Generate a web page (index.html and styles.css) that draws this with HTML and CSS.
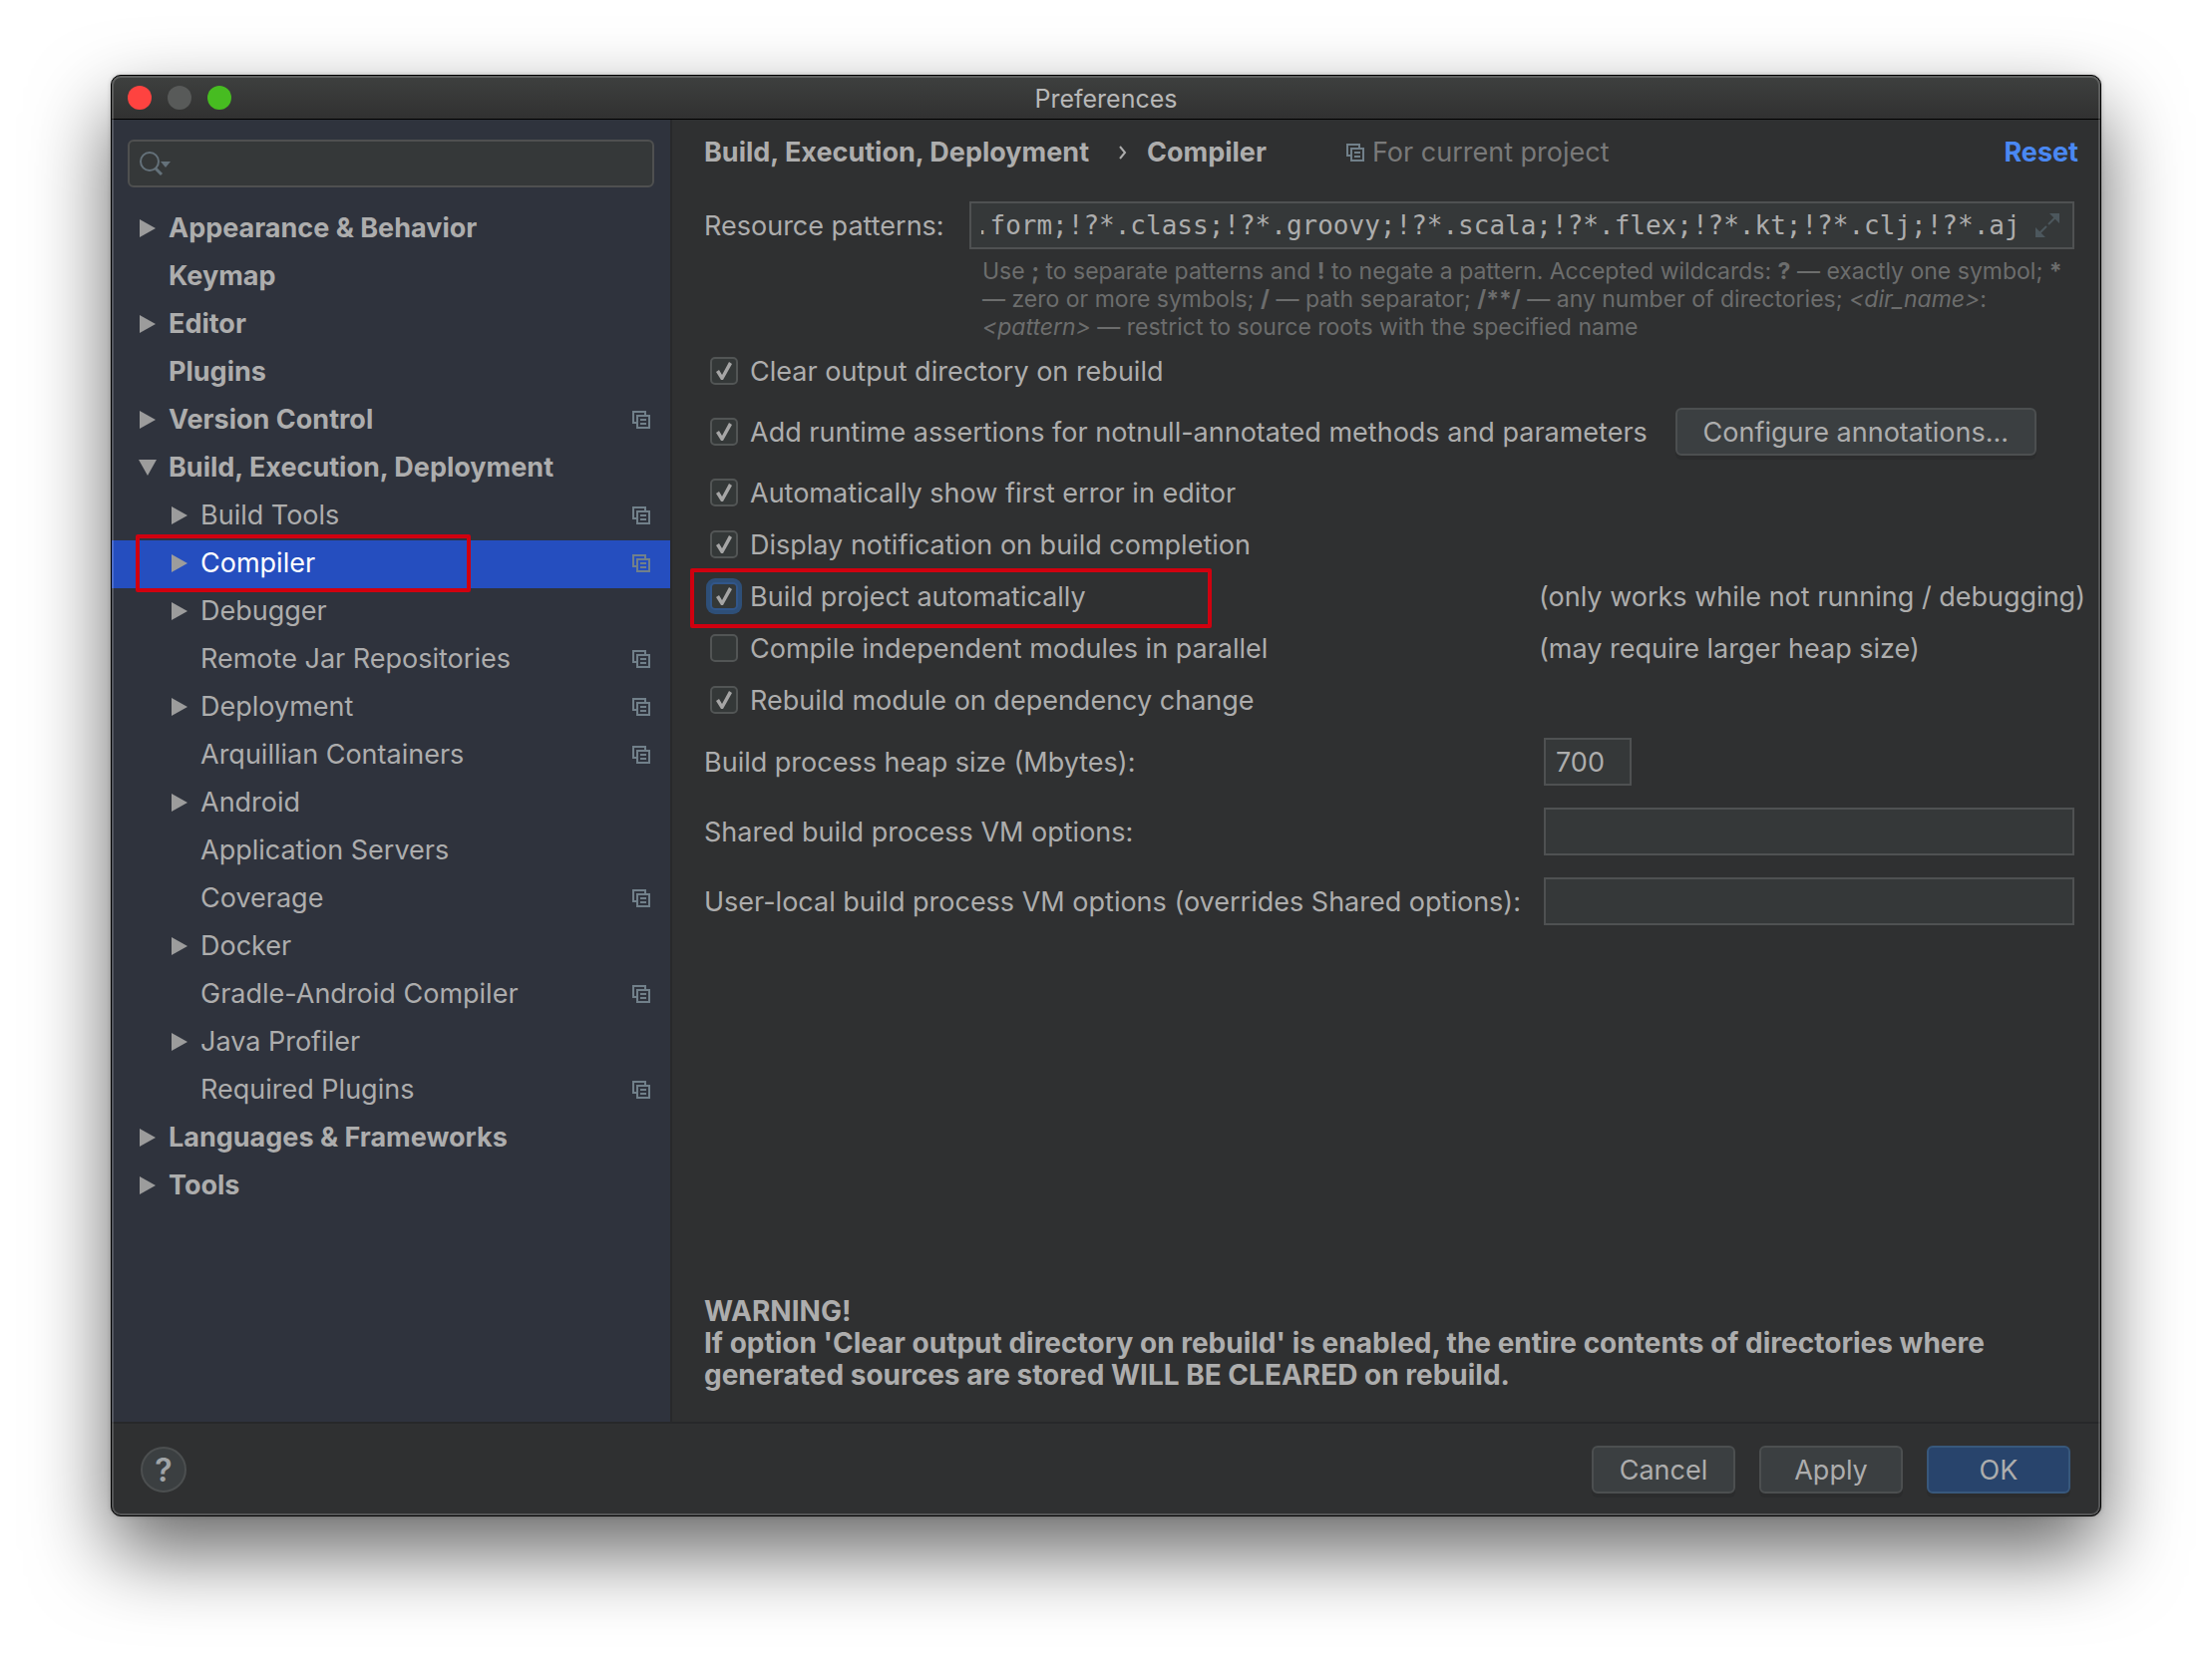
FILE: index.html
```html
<!DOCTYPE html>
<html lang="en">
<head>
<meta charset="utf-8">
<title>Preferences</title>
<link rel="stylesheet" href="styles.css">
</head>
<body>
<svg class="sprite" aria-hidden="true">
  <symbol id="right" viewBox="0 0 16 18"><path d="M0 0L16 9L0 18Z" fill="currentColor"/></symbol>
  <symbol id="down" viewBox="0 0 18 16"><path d="M0 0H18L9 16Z" fill="currentColor"/></symbol>
  <symbol id="copy" viewBox="0 0 18 18"><path d="M4 12H1V1H13V4M5 5H17V17H5ZM8 9H14M8 13H14" fill="none" stroke="currentColor" stroke-width="2"/></symbol>
</svg>
<div class="window">
  <header class="titlebar">
    <div class="lights"><i class="light close"></i><i class="light minimize"></i><i class="light zoom"></i></div>
    <h1 class="title">Preferences</h1>
  </header>
  <div class="body">
    <nav class="sidebar">
      <div class="search">
        <svg class="search-icon" viewBox="0 0 34 26" aria-hidden="true"><circle cx="11" cy="11" r="9" fill="none" stroke="currentColor" stroke-width="2"/><path d="M17 18L23 24" stroke="currentColor" stroke-width="3"/><path d="M22 11H32L27 17Z" fill="currentColor"/></svg>
        <input class="search-input" type="text" aria-label="Search">
      </div>
      <ul class="tree">
        <li class="node top"><svg class="arrow"><use href="#right"/></svg><span class="name">Appearance &amp; Behavior</span></li>
        <li class="node top"><span class="arrow"></span><span class="name">Keymap</span></li>
        <li class="node top"><svg class="arrow"><use href="#right"/></svg><span class="name">Editor</span></li>
        <li class="node top"><span class="arrow"></span><span class="name">Plugins</span></li>
        <li class="node top"><svg class="arrow"><use href="#right"/></svg><span class="name">Version Control</span><svg class="copy"><use href="#copy"/></svg></li>
        <li class="node top"><svg class="arrow open"><use href="#down"/></svg><span class="name">Build, Execution, Deployment</span></li>
        <li class="node"><svg class="arrow"><use href="#right"/></svg><span class="name">Build Tools</span><svg class="copy"><use href="#copy"/></svg></li>
        <li class="node selected"><svg class="arrow"><use href="#right"/></svg><span class="name">Compiler</span><svg class="copy"><use href="#copy"/></svg><i class="mark mark-node"></i></li>
        <li class="node"><svg class="arrow"><use href="#right"/></svg><span class="name">Debugger</span></li>
        <li class="node"><span class="arrow"></span><span class="name">Remote Jar Repositories</span><svg class="copy"><use href="#copy"/></svg></li>
        <li class="node"><svg class="arrow"><use href="#right"/></svg><span class="name">Deployment</span><svg class="copy"><use href="#copy"/></svg></li>
        <li class="node"><span class="arrow"></span><span class="name">Arquillian Containers</span><svg class="copy"><use href="#copy"/></svg></li>
        <li class="node"><svg class="arrow"><use href="#right"/></svg><span class="name">Android</span></li>
        <li class="node"><span class="arrow"></span><span class="name">Application Servers</span></li>
        <li class="node"><span class="arrow"></span><span class="name">Coverage</span><svg class="copy"><use href="#copy"/></svg></li>
        <li class="node"><svg class="arrow"><use href="#right"/></svg><span class="name">Docker</span></li>
        <li class="node"><span class="arrow"></span><span class="name">Gradle-Android Compiler</span><svg class="copy"><use href="#copy"/></svg></li>
        <li class="node"><svg class="arrow"><use href="#right"/></svg><span class="name">Java Profiler</span></li>
        <li class="node"><span class="arrow"></span><span class="name">Required Plugins</span><svg class="copy"><use href="#copy"/></svg></li>
        <li class="node top"><svg class="arrow"><use href="#right"/></svg><span class="name">Languages &amp; Frameworks</span></li>
        <li class="node top"><svg class="arrow"><use href="#right"/></svg><span class="name">Tools</span></li>
      </ul>
    </nav>
    <main class="panel">
      <div class="crumbs">
        <h2 class="crumb">Build, Execution, Deployment</h2>
        <svg class="chevron" viewBox="0 0 8 14" aria-hidden="true"><path d="M1 1L6 7L1 13" fill="none" stroke="currentColor" stroke-width="2"/></svg>
        <h2 class="crumb">Compiler</h2>
        <span class="scope"><svg class="copy"><use href="#copy"/></svg>For current project</span>
        <a class="reset" href="#">Reset</a>
      </div>
      <div class="patterns">
        <label class="patterns-label" for="patterns">Resource patterns:</label>
        <div class="patterns-field">
          <input class="patterns-input" id="patterns" type="text" value="!?*.java;!?*.form;!?*.class;!?*.groovy;!?*.scala;!?*.flex;!?*.kt;!?*.clj;!?*.aj">
          <svg class="expand" viewBox="0 0 26 26" aria-hidden="true"><path d="M15 1H25V11ZM1 15V25H11Z" fill="currentColor"/><path d="M21 5L14 12M5 21L12 14" stroke="currentColor" stroke-width="2"/></svg>
        </div>
      </div>
      <p class="hint">Use <b>;</b> to separate patterns and <b>!</b> to negate a pattern. Accepted wildcards: <b>?</b> — exactly one symbol; <b>*</b><br>— zero or more symbols; <b>/</b> — path separator; <b>/**/</b> — any number of directories; <i>&lt;dir_name&gt;</i>:<br><i>&lt;pattern&gt;</i> — restrict to source roots with the specified name</p>
      <div class="option"><label class="choice"><input class="check" type="checkbox" checked>Clear output directory on rebuild</label></div>
      <div class="option with-button"><label class="choice"><input class="check" type="checkbox" checked>Add runtime assertions for notnull-annotated methods and parameters</label><button class="button wide" type="button">Configure annotations...</button></div>
      <div class="option"><label class="choice"><input class="check" type="checkbox" checked>Automatically show first error in editor</label></div>
      <div class="option"><label class="choice"><input class="check" type="checkbox" checked>Display notification on build completion</label></div>
      <div class="option"><label class="choice"><input class="check focused" type="checkbox" checked>Build project automatically</label><span class="note">(only works while not running / debugging)</span><i class="mark mark-option"></i></div>
      <div class="option"><label class="choice"><input class="check" type="checkbox">Compile independent modules in parallel</label><span class="note">(may require larger heap size)</span></div>
      <div class="option"><label class="choice"><input class="check" type="checkbox" checked>Rebuild module on dependency change</label></div>
      <div class="fields">
        <label class="field-label" for="heap">Build process heap size (Mbytes):</label><input class="field short" id="heap" type="text" value="700">
        <label class="field-label" for="shared">Shared build process VM options:</label><input class="field" id="shared" type="text">
        <label class="field-label" for="local">User-local build process VM options (overrides Shared options):</label><input class="field" id="local" type="text">
      </div>
      <p class="warning">WARNING!<br>If option 'Clear output directory on rebuild' is enabled, the entire contents of directories where<br>generated sources are stored WILL BE CLEARED on rebuild.</p>
    </main>
  </div>
  <footer class="footer">
    <button class="help" type="button" aria-label="Help">?</button>
    <button class="button" type="button">Cancel</button>
    <button class="button" type="button">Apply</button>
    <button class="button primary" type="button">OK</button>
  </footer>
</div>
<script>
  const patterns = document.getElementById('patterns');
  patterns.scrollLeft = patterns.scrollWidth;
</script>
</body>
</html>
```
FILE: styles.css
```css
* { box-sizing: border-box; }
body {
  margin: 0;
  min-height: 100vh;
  padding: 75px 111px 147px;
  display: flex;
  background: #fff;
  color: #adadad;
  font: 27px/32px Inter, "Liberation Sans", sans-serif;
}
h1, h2, p, ul { margin: 0; padding: 0; font-size: inherit; }
input, button { font: inherit; color: inherit; }
.sprite { position: absolute; width: 0; height: 0; }

.window {
  position: relative;
  flex: 1;
  min-width: 0;
  display: flex;
  flex-direction: column;
  border: 1px solid #000;
  border-radius: 10px;
  background: #2f3031;
  overflow: hidden;
  box-shadow: 0 36px 80px rgba(0, 0, 0, .6), 0 0 4px rgba(0, 0, 0, .2);
}
.window::after {
  content: "";
  position: absolute;
  inset: 0;
  border: 2px solid rgba(255, 255, 255, .18);
  border-radius: 9px;
  pointer-events: none;
}
.titlebar {
  display: grid;
  grid-template-columns: 1fr auto 1fr;
  align-items: center;
  height: 44px;
  padding: 0 16px;
  border-bottom: 1px solid #000;
  background: linear-gradient(#3e403f, #313131);
}
.lights { display: flex; gap: 16px; }
.light { width: 24px; height: 24px; border-radius: 50%; }
.close { background: #fe4340; }
.minimize { background: #585a59; }
.zoom { background: #47bc21; }
.title { padding-top: 2px; font-size: 25px; font-weight: 400; color: #b8b8b8; }

.body { flex: 1; display: flex; }
.sidebar {
  flex: none;
  width: 562px;
  padding-top: 20px;
  border-right: 2px solid #28292b;
  background: #2f333d;
}
.search {
  display: flex;
  align-items: center;
  height: 48px;
  margin: 0 16px 18px;
  padding: 0 9px;
  border: 2px solid #4f5050;
  border-radius: 6px;
  background: #353839;
}
.search-icon { width: 34px; height: 26px; color: #64717a; }
.search-input { flex: 1; min-width: 0; border: 0; outline: 0; background: none; }
.tree { list-style: none; }
.node {
  position: relative;
  display: flex;
  align-items: center;
  gap: 12px;
  height: 48px;
  padding: 0 20px 2px 59px;
}
.node.top { padding-left: 27px; font-weight: 700; }
.node.selected { background: #254ebf; color: #fff; }
.arrow { flex: none; width: 18px; height: 18px; color: #9c9c9c; }
.arrow use { width: 16px; height: 18px; }
.arrow.open use { width: 18px; height: 16px; }
.name { flex: 1; white-space: nowrap; }
.copy { flex: none; width: 18px; height: 18px; color: #71808a; }
.mark { position: absolute; border: 4px solid #d0000f; border-radius: 2px; pointer-events: none; }
.mark-node { inset: -6px 200px -4px 24px; }

.panel {
  flex: 1;
  min-width: 0;
  display: flex;
  flex-direction: column;
  padding: 0 26px 31px 32px;
}
.crumbs {
  display: flex;
  align-items: center;
  height: 66px;
  margin: 0 -4px 16px 0;
  white-space: nowrap;
}
.chevron { width: 8px; height: 14px; margin: 0 20px 0 30px; }
.scope { display: flex; align-items: center; gap: 8px; margin-left: 80px; color: #797979; }
.reset { margin-left: auto; color: #4a88f2; font-weight: 700; text-decoration: none; }
.patterns { display: flex; align-items: center; }
.patterns-label { flex: none; width: 266px; padding-top: 2px; }
.patterns-field {
  flex: 1;
  min-width: 0;
  display: flex;
  align-items: center;
  gap: 14px;
  height: 48px;
  padding: 0 12px 0 10px;
  border: 2px solid #4f5152;
  background: #353839;
}
.patterns-input {
  flex: 1;
  min-width: 0;
  padding: 0;
  border: 0;
  outline: 0;
  background: none;
  font-family: "DejaVu Sans Mono", monospace;
  font-size: 26px;
}
.expand { flex: none; width: 26px; height: 26px; color: #4c575d; }
.hint {
  margin: 8px 0 4px 279px;
  font-size: 23px;
  line-height: 28px;
  color: #6c6d6d;
  white-space: nowrap;
}

.option {
  position: relative;
  display: grid;
  grid-template-columns: 1fr 537px;
  align-items: center;
  height: 52px;
  white-space: nowrap;
}
.with-button { display: flex; gap: 28px; height: 70px; }
.choice { display: flex; align-items: center; gap: 12px; padding: 2px 0 0 6px; }
.note { padding-top: 2px; }
.check {
  appearance: none;
  flex: none;
  width: 28px;
  height: 28px;
  margin: 0 0 2px;
  border: 2px solid #525555;
  border-radius: 5px;
  background: #343838;
}
.check:checked::after {
  content: "";
  display: block;
  width: 24px;
  height: 24px;
  background: #a5a5a5;
  clip-path: polygon(4px 13px, 7px 11px, 10px 16px, 17px 3px, 20px 5px, 11px 21px, 9px 21px);
}
.focused { border-color: #31568a; box-shadow: 0 0 0 4px #2e4f78; }
.mark-option { inset: -2px auto -6px -14px; width: 523px; }

.fields {
  display: grid;
  grid-template-columns: 1fr 532px;
  align-items: center;
  gap: 22px 0;
  margin-top: 12px;
}
.field-label { padding-top: 2px; }
.field {
  width: 100%;
  height: 48px;
  padding: 0 10px;
  border: 2px solid #4f5152;
  outline: 0;
  background: #353839;
}
.short { width: 88px; }
.warning { margin-top: auto; font-size: 28px; font-weight: 700; white-space: nowrap; }

.button {
  width: 144px;
  height: 48px;
  padding: 2px 0 0;
  border: 2px solid #4c4f50;
  border-radius: 6px;
  background: #3b3f41;
  box-shadow: 0 4px 0 #2b2c2d;
}
.wide { width: 362px; }
.primary { border-color: #38587c; background: #28446c; }
.footer {
  display: flex;
  align-items: center;
  gap: 24px;
  height: 94px;
  padding: 0 30px 0 29px;
  border-top: 2px solid #27282a;
}
.help {
  width: 46px;
  height: 46px;
  margin-right: auto;
  padding: 2px 0 0;
  border: 2px solid #4c4f50;
  border-radius: 50%;
  background: #3b3f41;
  color: #a0a4a7;
  font-size: 32px;
  font-weight: 600;
}
```
